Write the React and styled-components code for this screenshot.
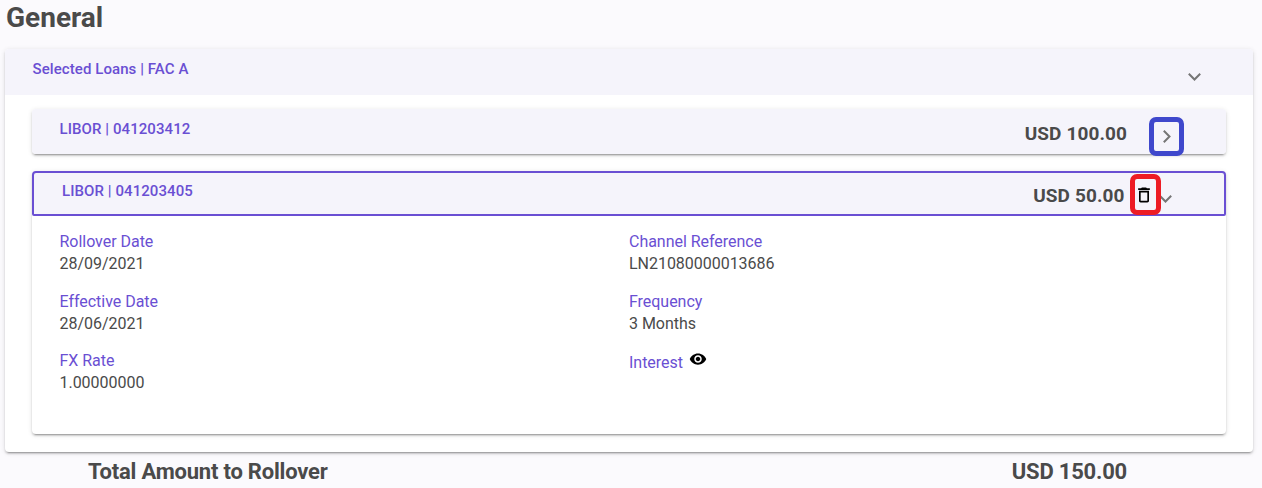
import React from "react";
import styled, { createGlobalStyle } from "styled-components";

const GlobalStyle = createGlobalStyle`
  * { box-sizing: border-box; }
  body {
    margin: 0;
    background: #fbfafd;
    color: #4a4a4a;
    font-family: Roboto, "Liberation Sans", sans-serif;
  }
  svg { display: block; }
`;

const elevation = `0 3px 1px -2px rgba(0,0,0,.2), 0 2px 2px 0 rgba(0,0,0,.14), 0 1px 5px 0 rgba(0,0,0,.12)`;

const Page = styled.main`
  height: 488px;
  padding: 0 9px 0 5px;
  overflow: hidden;
`;

const Title = styled.h1`
  margin: 0 0 0 1px;
  height: 49px;
  padding-top: 2px;
  font-size: 28px;
  line-height: 32px;
  font-weight: 700;
`;

const Card = styled.section`
  height: 403px;
  background: #fff;
  border-radius: 4px;
  box-shadow: ${elevation};
`;

const CardHeader = styled.header`
  display: flex;
  justify-content: space-between;
  height: 46px;
  padding: 10px 52.5px 0 27.5px;
  background: #f5f4fb;
  border-radius: 4px 4px 0 0;
`;

const HeaderLabel = styled.span`
  color: #6a4fd3;
  font-size: 15px;
  line-height: 20px;
  font-weight: 500;
  letter-spacing: 0.08px;
`;

const CardBody = styled.div`
  display: flex;
  flex-direction: column;
  gap: 17px;
  padding: 14px 27px 0;
`;

const Panel = styled.article`
  height: ${(p) => p.$height};
  background: #fff;
  border-radius: 4px;
  box-shadow: ${elevation};
`;

const LoanHeader = styled.header`
  display: flex;
  justify-content: space-between;
  height: 45px;
  padding: ${(p) => (p.$active ? "8px 52px 0 28px" : "10px 55px 0 27.5px")};
  background: #f5f4fb;
  border: ${(p) => (p.$active ? "2px solid #6a4fd3" : "0")};
  border-radius: ${(p) => (p.$active ? "4px 4px 2px 2px" : "4px")};
`;

const LoanSummary = styled.div`
  display: flex;
  align-items: flex-start;
`;

const Amount = styled.strong`
  font-size: 19px;
  line-height: 24px;
  font-weight: 700;
  margin-top: 3px;
  letter-spacing: 0.1px;
`;

const IconSlot = styled.span`
  position: relative;
  flex: none;
  margin: ${(p) => p.$margin || "0"};
`;

const Highlight = styled.span`
  position: absolute;
  inset: ${(p) => p.$inset};
  border: 5px solid ${(p) => p.$color};
  border-radius: 7px;
  z-index: 1;
`;

const Details = styled.div`
  display: grid;
  grid-template-columns: 569.5px 1fr;
  grid-template-rows: 60px 59px 60px;
  padding: 15px 0 0 27.5px;
`;

const Field = styled.div`
  font-size: 16px;
  line-height: 22px;
  letter-spacing: -0.03px;
`;

const FieldLabel = styled.div`
  display: flex;
  color: #6a4fd3;
  font-weight: 450;
  padding-top: ${(p) => p.$offset || "0"};
`;

const Total = styled.footer`
  display: flex;
  justify-content: space-between;
  padding: 7px 126px 0 83px;
  font-size: 22px;
  line-height: 26px;
  font-weight: 700;
  letter-spacing: -0.21px;
`;

const Chevron = ({ right }) => (
  <svg width={right ? 8 : 13} height={right ? 13 : 8} viewBox={right ? "0 0 8 13" : "0 0 13 8"} fill="none" stroke="#757575" strokeWidth="2">
    <path d={right ? "M.8 .8 6.500 6.500 .8 12.200" : "M.8 .8 6.500 6.500 12.200 .8"} />
  </svg>
);

const TrashIcon = () => (
  <svg width="20" height="20" viewBox="0 0 24 24" fill="#000">
    <path d="M6 19c0 1.100.9 2 2 2h8c1.100 0 2-.9 2-2V7H6v12zM8 9h8v10H8V9zm7.500-5-1-1h-5l-1 1H5v2h14V4h-3.500z" />
  </svg>
);

const EyeIcon = () => (
  <svg width="18" height="18" viewBox="0 0 24 24" fill="#000">
    <path d="M12 4.500C7 4.500 2.730 7.610 1 12c1.730 4.390 6 7.500 11 7.500s9.270-3.110 11-7.500c-1.730-4.390-6-7.500-11-7.500zM12 17c-2.760 0-5-2.240-5-5s2.240-5 5-5 5 2.240 5 5-2.240 5-5 5zm0-8c-1.660 0-3 1.340-3 3s1.340 3 3 3 3-1.340 3-3-1.340-3-3-3z" />
  </svg>
);

const fields = [
  { label: "Rollover Date", value: "28/09/2021" },
  { label: "Channel Reference", value: "LN21080000013686" },
  { label: "Effective Date", value: "28/06/2021" },
  { label: "Frequency", value: "3 Months" },
  { label: "FX Rate", value: "1.00000000" },
];

export default function App() {
  return (
    <Page>
      <GlobalStyle />
      <Title>General</Title>
      <Card>
        <CardHeader>
          <HeaderLabel>Selected Loans | FAC A</HeaderLabel>
          <IconSlot $margin="14px 0 0"><Chevron /></IconSlot>
        </CardHeader>
        <CardBody>
          <Panel $height="45px">
            <LoanHeader>
              <HeaderLabel>LIBOR | 041203412</HeaderLabel>
              <LoanSummary>
                <Amount>USD 100.00</Amount>
                <IconSlot $margin="11px 0 0 36px">
                  <Chevron right />
                  <Highlight $inset="-13px -13px -13px -14px" $color="#3f48cc" />
                </IconSlot>
              </LoanSummary>
            </LoanHeader>
          </Panel>
          <Panel $height="263px">
            <LoanHeader $active>
              <HeaderLabel>LIBOR | 041203405</HeaderLabel>
              <LoanSummary>
                <Amount>USD 50.00</Amount>
                <IconSlot $margin="4px 0 0 9.5px">
                  <TrashIcon />
                  <Highlight $inset="-11px -7px -10px -4px" $color="#ed1c24" />
                </IconSlot>
                <IconSlot $margin="14px 0 0 5px"><Chevron /></IconSlot>
              </LoanSummary>
            </LoanHeader>
            <Details>
              {fields.map(({ label, value }) => (
                <Field key={label}>
                  <FieldLabel>{label}</FieldLabel>
                  {value}
                </Field>
              ))}
              <Field>
                <FieldLabel $offset="2px">
                  Interest
                  <IconSlot $margin="-2px 0 0 6px"><EyeIcon /></IconSlot>
                </FieldLabel>
              </Field>
            </Details>
          </Panel>
        </CardBody>
      </Card>
      <Total>
        <span>Total Amount to Rollover</span>
        <span>USD 150.00</span>
      </Total>
    </Page>
  );
}
